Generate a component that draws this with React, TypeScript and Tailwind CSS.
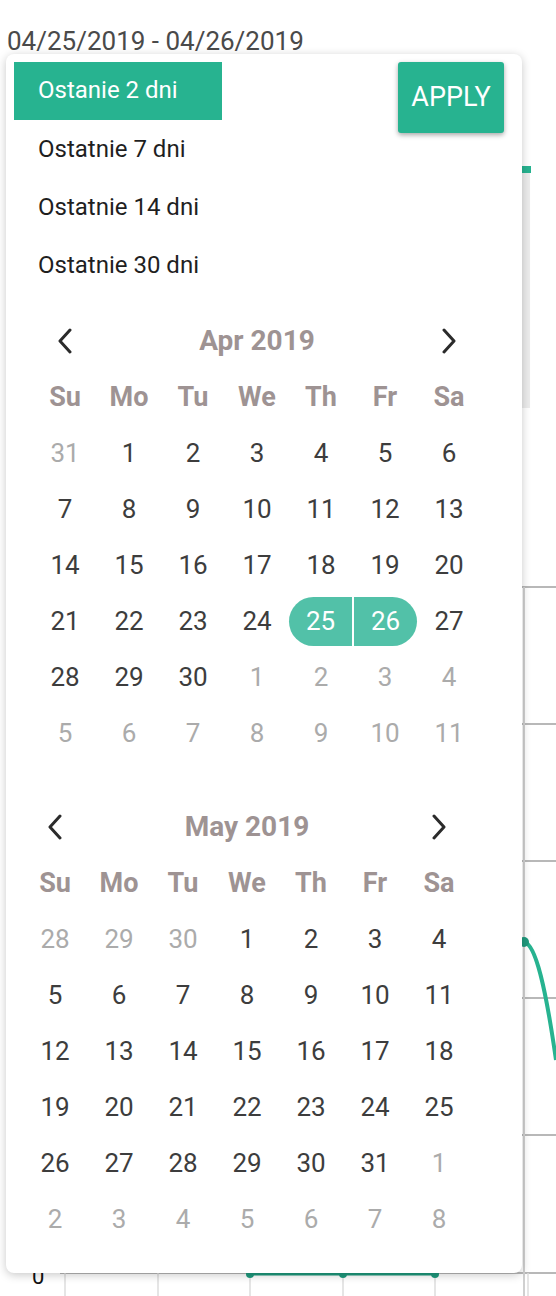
import React from 'react';

type Cell = { d: number; muted?: boolean; sel?: 'start' | 'end' };

const DAYS = ['Su', 'Mo', 'Tu', 'We', 'Th', 'Fr', 'Sa'];

const build = (prevTail: number[], count: number, nextCount: number): Cell[] => {
    const cells: Cell[] = prevTail.map(d => ({ d, muted: true }));
    for (let i = 1; i <= count; i++) cells.push({ d: i });
    for (let i = 1; i <= nextCount; i++) cells.push({ d: i, muted: true });
    return cells;
};

const april = build([31], 30, 11).map(c =>
    !c.muted && c.d === 25 ? { ...c, sel: 'start' as const } : !c.muted && c.d === 26 ? { ...c, sel: 'end' as const } : c
);
const may = build([28, 29, 30], 31, 8);

const Chevron = ({ dir }: { dir: 'left' | 'right' }) => (
    <svg width="16" height="26" viewBox="0 0 16 26" fill="none">
        <path
            d={dir === 'left' ? 'M13 2 L3 13 L13 24' : 'M3 2 L13 13 L3 24'}
            stroke="#2b2b2b"
            strokeWidth="3"
            strokeLinecap="round"
            strokeLinejoin="round"
        />
    </svg>
);

const Month = ({ title, cells, offset }: { title: string; cells: Cell[]; offset: string }) => (
    <div className={`w-[448px] ${offset}`}>
        {/* Header */}
        <div className="grid grid-cols-7 h-[56px] items-center">
            <div className="flex justify-center"><Chevron dir="left" /></div>
            <div className="col-span-5 text-center text-[28px] font-bold text-[#9e9393]">{title}</div>
            <div className="flex justify-center"><Chevron dir="right" /></div>
        </div>
        <div className="grid grid-cols-7 h-[56px] items-center">
            {DAYS.map(d => (
                <div key={d} className="text-center text-[27px] font-bold text-[#9e9393]">{d}</div>
            ))}
        </div>
        <div className="grid grid-cols-7">
            {cells.map((c, i) => (
                <div key={i} className="h-[56px] flex items-center">
                    {c.sel ? (
                        <div
                            className={`w-full h-[49px] flex items-center justify-center bg-[#52c1a8] text-white text-[26px] ${
                                c.sel === 'start' ? 'rounded-l-full mr-[1px]' : 'rounded-r-full ml-[1px]'
                            }`}
                        >
                            {c.d}
                        </div>
                    ) : (
                        <div className={`w-full text-center text-[26px] ${c.muted ? 'text-[#ababab]' : 'text-[#3d3d3d]'}`}>
                            {c.d}
                        </div>
                    )}
                </div>
            ))}
        </div>
    </div>
);

const ranges = ['Ostanie 2 dni', 'Ostatnie 7 dni', 'Ostatnie 14 dni', 'Ostatnie 30 dni'];

const ChartBackdrop = () => (
    <svg className="absolute inset-0" width="556" height="1296" viewBox="0 0 556 1296">
        <rect x="522" y="173" width="8" height="235" fill="#ececec" />
        <rect x="522" y="166" width="9" height="7" fill="#27b390" />
        {[587, 724, 861, 998, 1135].map(y => (
            <line key={y} x1="522" x2="556" y1={y} y2={y} stroke="#a0a0a0" strokeWidth="1.5" />
        ))}
        <line x1="60" x2="556" y1="1273" y2="1273" stroke="#a0a0a0" strokeWidth="1.5" />
        <line x1="524" x2="524" y1="587" y2="1296" stroke="#d0d0d0" strokeWidth="2" />
        {[65, 158, 250, 343, 435, 528].map(x => (
            <line key={x} x1={x} x2={x} y1="1273" y2="1296" stroke="#dcdcdc" strokeWidth="1.5" />
        ))}
        <path d="M250 1274 L435 1274" stroke="#1f9a7d" strokeWidth="3" />
        {[250, 343, 435].map(x => (
            <circle key={x} cx={x} cy="1274" r="4" fill="#1f9a7d" />
        ))}
        <path d="M524 942 C 536 944, 546 990, 556 1060" stroke="#27b390" strokeWidth="4" fill="none" />
        <circle cx="524" cy="942" r="5" fill="#1f9a7d" />
        <text x="32" y="1284" fontSize="22" fill="#111" fontFamily="Roboto, sans-serif">0</text>
    </svg>
);

export default function App() {
    return (
        <div className="relative w-[556px] h-[1296px] bg-white overflow-hidden font-['Roboto',sans-serif]">
            <ChartBackdrop />

            {/* Selected range */}
            <div className="relative h-[54px] pt-[26px] pl-[7px] text-[26px] leading-[30px] text-[#4a4a4a] whitespace-nowrap">
                04/25/2019 - 04/26/2019
            </div>

            {/* Picker popup */}
            <div className="relative ml-[6px] w-[516px] h-[1219px] bg-white rounded-lg shadow-[0_2px_10px_rgba(0,0,0,0.22)]">
                <div className="flex justify-between pt-[8px] pl-[8px] pr-[18px]">
                    <div className="w-[208px]">
                        {ranges.map((r, i) => (
                            <div
                                key={r}
                                className={`h-[58px] flex items-center pl-[24px] pb-[2px] text-[24px] ${
                                    i === 0 ? 'bg-[#27b390] text-white h-[57px] mb-[1px]' : 'text-[#1f1f1f]'
                                }`}
                            >
                                {r}
                            </div>
                        ))}
                    </div>
                    <button className="w-[106px] h-[71px] bg-[#27b390] text-white text-[27px] rounded-[3px] shadow-[0_2px_5px_rgba(0,0,0,0.35)]">
                        APPLY
                    </button>
                </div>

                <div className="mt-[18px]">
                    <Month title="Apr 2019" cells={april} offset="ml-[27px]" />
                </div>
                <div className="mt-[38px]">
                    <Month title="May 2019" cells={may} offset="ml-[17px]" />
                </div>
            </div>
        </div>
    );
}
